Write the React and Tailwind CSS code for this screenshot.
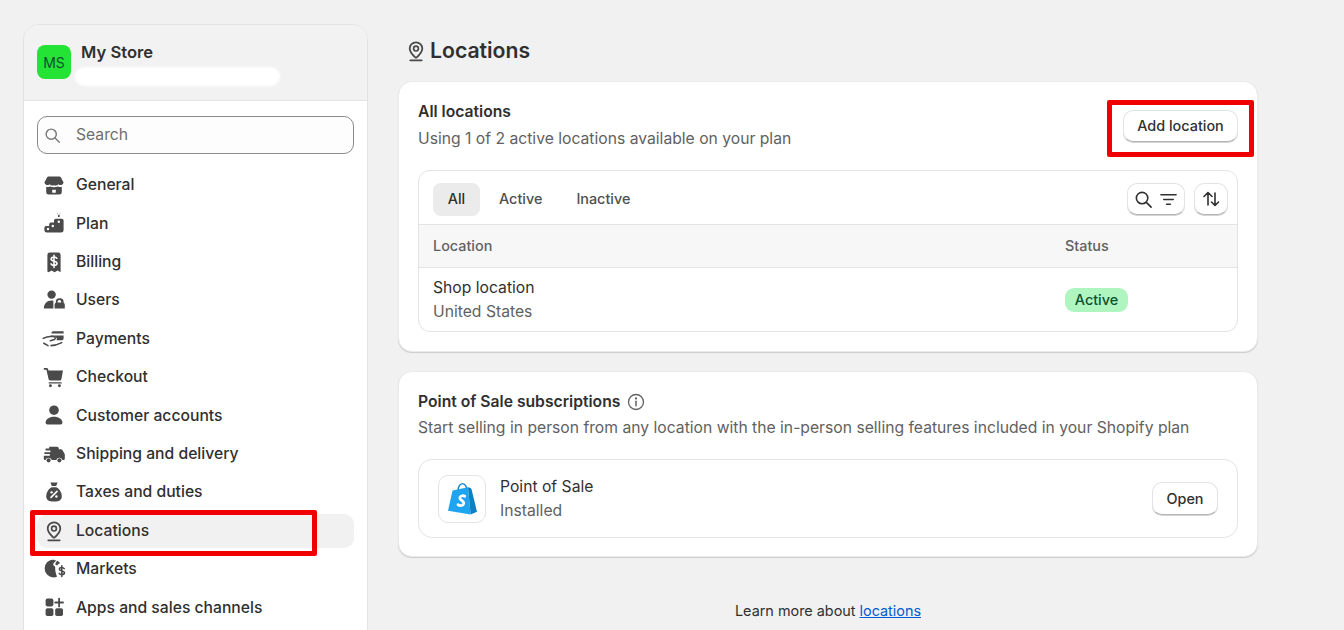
import React from 'react';

// Polaris-like icons, drawn on a 20x20 grid
const Glyph = ({ children, className = 'w-6 h-6' }) => (
  <svg viewBox="0 0 20 20" className={className} fill="#4a4a4a">{children}</svg>
);

const PinIcon = ({ className }) => (
  <Glyph className={className}>
    <path fillRule="evenodd" d="M10 2a6 6 0 0 0-6 6c0 2.7 2 5 3.9 6.9.6.6 1.4 1.2 2.1 1.6.7-.4 1.5-1 2.1-1.6C14 13 16 10.7 16 8a6 6 0 0 0-6-6Zm0 1.5A4.5 4.5 0 0 1 14.5 8c0 2-1.5 3.9-3.4 5.8-.4.4-.8.7-1.1.9-.3-.2-.7-.5-1.1-.9C7 11.9 5.500 10 5.500 8A4.500 4.500 0 0 1 10 3.500Z" />
    <path fillRule="evenodd" d="M10 5.300a2.700 2.700 0 1 0 0 5.400 2.700 2.700 0 0 0 0-5.400Zm0 1.400a1.300 1.300 0 1 1 0 2.600 1.300 1.300 0 0 1 0-2.600Z" />
    <rect x="4.500" y="17" width="11" height="1.500" rx=".75" />
  </Glyph>
);

const navIcons = {
  general: (
    <Glyph>
      <path d="M5.500 3h9a1.500 1.500 0 0 1 1.300.8L18 8a2.600 2.600 0 0 1-4.300 1.400 3.300 3.300 0 0 1-3.700.8 3.300 3.300 0 0 1-3.700-.8A2.600 2.600 0 0 1 2 8l2.200-4.200A1.500 1.500 0 0 1 5.500 3Z" />
      <path fillRule="evenodd" d="M3.500 11.500c1 .3 2.200.2 3.200-.3 2 .8 4.600.8 6.600 0 1 .5 2.200.6 3.200.3V16a2 2 0 0 1-2 2H5.500a2 2 0 0 1-2-2v-4.500Zm5 2.500v2.500h3V14h-3Z" />
    </Glyph>
  ),
  plan: (
    <Glyph>
      <path d="M2 14a1.500 1.500 0 0 1 1.500-1.500H6V11a1.500 1.500 0 0 1 1.500-1.500H10V8a1.500 1.500 0 0 1 1.500-1.500h5A1.500 1.500 0 0 1 18 8v8a2 2 0 0 1-2 2H4a2 2 0 0 1-2-2v-2Z" />
      <circle cx="14" cy="9" r="1" fill="#fff" />
      <circle cx="9" cy="12.500" r="1" fill="#fff" />
      <circle cx="5" cy="15" r="1" fill="#fff" />
      <path d="M13.300 2h1.400v3h-1.400zM12.500 2l1.500 1.500L15.500 2z" />
    </Glyph>
  ),
  billing: (
    <Glyph>
      <path d="M4.500 4a2 2 0 0 1 2-2h7a2 2 0 0 1 2 2v14.500l-2.500-1.500-2.500 1.500-2.500-1.500-2.500 1.500L4.500 18V4Z" />
      <path d="M12.400 6.900c-.4-.7-1.300-1.100-2.400-1.100-1.400 0-2.400.7-2.400 1.800 0 2.400 4.900 1.100 4.900 3.500 0 1.100-1.100 1.800-2.500 1.800-1.200 0-2.100-.5-2.500-1.300M10 4.500v10" fill="none" stroke="#fff" strokeWidth="1.300" strokeLinecap="round" />
    </Glyph>
  ),
  users: (
    <Glyph>
      <circle cx="8" cy="5.500" r="3.500" />
      <path d="M1.500 17c0-3.700 2.600-6.500 6.500-6.500.5 0 1 0 1.500.1V17H1.500Z" />
      <path fillRule="evenodd" d="M14.500 8.500A3 3 0 0 0 11.500 11.500v.7a1.700 1.700 0 0 0-1 1.500V17h8.500v-3.300a1.700 1.700 0 0 0-1-1.500v-.7a3 3 0 0 0-3-3Zm0 1.500A1.500 1.500 0 0 1 16 11.500V12h-3v-.5A1.500 1.500 0 0 1 14.500 10Z" />
    </Glyph>
  ),
  payments: (
    <Glyph>
      <path d="M8 4.500a1.500 1.500 0 0 1 1.500-1H18v2H7.700L8 4.500ZM7 7h11v2.500a1.500 1.500 0 0 1-1.500 1.500h-4.400c.5-.8.300-2-.6-2.600-.7-.400-1.500-.4-2.500-.4H7.500L7 7Z" />
      <path d="M1 9.500c2-1 4-1.600 6-1.600h2.500c1.500 0 2.200 1.800.8 2.500L7 11.500M7.500 15.500c3 0 6-1 9-2.500M1.500 13.500 5 15.500" fill="none" stroke="#4a4a4a" strokeWidth="1.300" strokeLinecap="round" />
    </Glyph>
  ),
  checkout: (
    <Glyph>
      <path d="M1.500 2.500h2.200a1.500 1.500 0 0 1 1.500 1.200l.2.800h12.100l-1.300 7.200a1.500 1.500 0 0 1-1.500 1.300H7a1.500 1.500 0 0 1-1.500-1.200L3.700 4H1.500V2.500Z" />
      <rect x="5.500" y="14.300" width="11" height="1.200" rx=".6" />
      <circle cx="7" cy="17.300" r="1.200" />
      <circle cx="14.500" cy="17.300" r="1.200" />
    </Glyph>
  ),
  customers: (
    <Glyph>
      <circle cx="10" cy="6" r="4" />
      <path d="M3 16.500c0-3 3-5 7-5s7 2 7 5a1.500 1.500 0 0 1-1.500 1.500h-11A1.500 1.500 0 0 1 3 16.500Z" />
    </Glyph>
  ),
  shipping: (
    <Glyph>
      <path d="M6 4h6.500A1.500 1.500 0 0 1 14 5.500V6h1.700a1.500 1.500 0 0 1 1.300.7l1.800 3a1.500 1.500 0 0 1 .2.800V14a1 1 0 0 1-1 1h-1a2.700 2.700 0 0 0-5.100 0H8.100a2.700 2.700 0 0 0-5.200 0H2.500a1 1 0 0 1-1-1v-2.500h5V10H2V8.500h5V7H3V5.500h3V4Z" />
      <circle cx="5.500" cy="15.300" r="1.700" />
      <circle cx="14.500" cy="15.300" r="1.700" />
    </Glyph>
  ),
  taxes: (
    <Glyph>
      <path d="M7 2h6l-1.200 3H8.200L7 2Z" />
      <path d="M8 6h4c2.500 1.300 4.500 4.500 4.500 7.500 0 3-2 4.500-6.500 4.500s-6.500-1.500-6.500-4.500C3.500 10.500 5.500 7.300 8 6Z" />
      <path d="m7.500 14.500 5-5" stroke="#fff" strokeWidth="1.300" strokeLinecap="round" />
      <circle cx="8" cy="10.300" r="1" fill="#fff" />
      <circle cx="12" cy="13.700" r="1" fill="#fff" />
    </Glyph>
  ),
  locations: <PinIcon className="w-6 h-6" />,
  markets: (
    <Glyph>
      <path d="M9.500 2.500a7.500 7.500 0 0 1 2.500.4L9.800 5c-.8.800-.5 2 .5 2.500.9.400.7 1.500.7 2.500 0 2 .7 4 1.500 6.500-.9.300-1.800.5-2.800.5a7.500 7.500 0 0 1 0-15Z" />
      <path d="M12.500 3.200c1.100.5 2 1.200 2.700 2.100-1.100.2-2 .8-2.500 1.700-.7-.3-1.500-.6-1.700-1.200l1.500-2.600Z" />
      <path d="M18.500 9.700c-.5-.7-1.200-1-2-1-1.200 0-2 .6-2 1.500 0 2 4.200.9 4.200 3 0 .9-.9 1.500-2.100 1.500-1 0-1.800-.4-2.200-1.100M16.500 7.300v9" fill="none" stroke="#4a4a4a" strokeWidth="1.300" strokeLinecap="round" />
    </Glyph>
  ),
  apps: (
    <Glyph>
      <rect x="3" y="3" width="6.500" height="6.500" rx="1.500" />
      <rect x="3" y="11" width="6.500" height="6.500" rx="1.500" />
      <rect x="11" y="11" width="6.500" height="6.500" rx="1.500" />
      <path d="M14.250 3v6.500M11 6.250h6.500" stroke="#4a4a4a" strokeWidth="1.500" strokeLinecap="round" />
    </Glyph>
  ),
};

const navItems = [
  ['general', 'General'],
  ['plan', 'Plan'],
  ['billing', 'Billing'],
  ['users', 'Users'],
  ['payments', 'Payments'],
  ['checkout', 'Checkout'],
  ['customers', 'Customer accounts'],
  ['shipping', 'Shipping and delivery'],
  ['taxes', 'Taxes and duties'],
  ['locations', 'Locations'],
  ['markets', 'Markets'],
  ['apps', 'Apps and sales channels'],
];

const Sidebar = () => (
  <aside className="w-[345px] shrink-0 h-[640px] bg-white rounded-t-[16px] border border-[#e3e3e3] overflow-hidden">
    <div className="h-[76px] bg-[#f2f2f2] border-b border-[#e3e3e3] flex items-start pl-[13px] pt-[20px] gap-[10px]">
      <div className="w-[34px] h-[34px] rounded-[8px] bg-[#25e334] flex items-center justify-center text-[14px] text-[#0c5132]">MS</div>
      <div className="-mt-[1px]">
        <div className="text-[16.6px] leading-[16px] font-semibold text-[#303030]">My Store</div>
        <div className="w-[205px] h-[19px] mt-[7px] -ml-[6px] rounded-full bg-white blur-[1px]" />
      </div>
    </div>
    <div className="px-[13px] pt-[15px]">
      <div className="h-[38px] rounded-[10px] border border-[#8a8a8a] bg-[#fdfdfd] flex items-center pl-[6px] gap-[15px] text-[#6f6f6f]">
        <svg viewBox="0 0 20 20" className="w-[17px] h-[17px]" fill="none" stroke="#7a7a7a" strokeWidth="1.700" strokeLinecap="round">
          <circle cx="8.500" cy="8.500" r="6" />
          <path d="m13 13 5 5" />
        </svg>
        <span className="text-[15.7px]">Search</span>
      </div>
      <nav className="mt-[14px] flex flex-col gap-[4.4px]">
        {navItems.map(([id, label]) => (
          <div
            key={id}
            className={`h-[34px] shrink-0 flex items-center pl-[5px] gap-[10px] rounded-[10px] text-[15.7px] font-[500] text-[#303030] ${id === 'locations' ? 'bg-[#f1f1f1]' : ''}`}
          >
            {navIcons[id]}
            <span>{label}</span>
          </div>
        ))}
      </nav>
    </div>
  </aside>
);

const SecondaryButton = ({ children, className = '' }) => (
  <button className={`bg-white rounded-[10px] border border-[#e3e3e3] border-b-[#b5b5b5] shadow-[0_1px_0_#d4d4d4] flex items-center justify-center text-[14.4px] font-[550] text-[#303030] ${className}`}>
    {children}
  </button>
);

const Card = ({ children, className = '' }) => (
  <section className={`bg-white rounded-[14px] border border-[#ebebeb] shadow-[0_1px_1px_rgba(0,0,0,0.15)] px-[19px] ${className}`}>
    {children}
  </section>
);

const LocationsCard = () => (
  <Card className="h-[271px] pt-[19px]">
    <div className="flex justify-between">
      <div>
        <h2 className="text-[15.7px] leading-[22px] font-semibold text-[#303030]">All locations</h2>
        <p className="mt-[5px] text-[15.7px] leading-[22px] text-[#616161]">Using 1 of 2 active locations available on your plan</p>
      </div>
      <SecondaryButton className="w-[115px] h-[32px] mt-[9px]">Add location</SecondaryButton>
    </div>
    <div className="mt-[20px] h-[162px] rounded-[12px] border border-[#e3e3e3] overflow-hidden">
      <div className="h-[53px] pt-[3px] flex items-center pl-[14px] pr-[9px] text-[14.4px] font-[550] text-[#4f4f4f]">
        <span className="w-[47px] h-[33px] rounded-[8px] bg-[#ebebeb] flex items-center justify-center text-[#303030]">All</span>
        <span className="ml-[19px]">Active</span>
        <span className="ml-[34px]">Inactive</span>
        <SecondaryButton className="ml-auto w-[58px] h-[32px] gap-[6px]">
          <svg viewBox="0 0 20 20" className="w-[19px] h-[19px]" fill="none" stroke="#303030" strokeWidth="1.700" strokeLinecap="round">
            <circle cx="8.500" cy="8.500" r="6" />
            <path d="m13 13 5 5" />
          </svg>
          <svg viewBox="0 0 20 20" className="w-[19px] h-[19px]" fill="none" stroke="#303030" strokeWidth="1.600" strokeLinecap="round">
            <path d="M2 5h16M5 10h10M8 15h4" />
          </svg>
        </SecondaryButton>
        <SecondaryButton className="ml-[9px] w-[34px] h-[32px]">
          <svg viewBox="0 0 20 20" className="w-[20px] h-[20px]" fill="none" stroke="#303030" strokeWidth="1.600" strokeLinecap="round" strokeLinejoin="round">
            <path d="M7 16V3.500M3 7.500l4-4 4 4M14 4v12.500M10.500 13l3.500 3.500 3.500-3.500" />
          </svg>
        </SecondaryButton>
      </div>
      <div className="h-[44px] bg-[#f7f7f7] border-y border-[#e3e3e3] flex items-center text-[14.4px] font-[550] text-[#616161]">
        <span className="w-[646px] pl-[14px]">Location</span>
        <span>Status</span>
      </div>
      <div className="h-[63px] flex items-center">
        <div className="w-[646px] pl-[14px] text-[15.7px] leading-[24px]">
          <div className="text-[#303030]">Shop location</div>
          <div className="text-[#616161]">United States</div>
        </div>
        <span className="w-[63px] h-[24px] rounded-[9px] bg-[#aff5c0] flex items-center justify-center text-[14.4px] font-[550] text-[#0c5132]">Active</span>
      </div>
    </div>
  </Card>
);

const PointOfSaleCard = () => (
  <Card className="h-[186px] mt-[19px] pt-[18px]">
    <div className="flex items-center gap-[6px] h-[24px]">
      <h2 className="text-[15.7px] font-semibold text-[#303030]">Point of Sale subscriptions</h2>
      <svg viewBox="0 0 20 20" className="w-[20px] h-[20px]" fill="none" stroke="#616161" strokeWidth="1.300" strokeLinecap="round">
        <circle cx="10" cy="10" r="7.500" />
        <path d="M10 9.300v4.500" strokeWidth="1.500" />
        <circle cx="10" cy="6.500" r=".5" fill="#616161" />
      </svg>
    </div>
    <p className="mt-[1px] text-[15.7px] leading-[26px] text-[#616161]">Start selling in person from any location with the in-person selling features included in your Shopify plan</p>
    <div className="mt-[18px] h-[79px] rounded-[14px] border border-[#e3e3e3] flex items-center pl-[19px] pr-[19px]">
      <div className="w-[48px] h-[48px] rounded-[10px] border border-[#e3e3e3] flex items-center justify-center">
        <svg viewBox="0 0 32 36" className="w-[29px] h-[34px]">
          <path d="M11 9c0-4 2-8 5-8s5 4 5 8" fill="none" stroke="#0f7fc4" strokeWidth="1.500" />
          <path d="M5 8.500 22 5l3 30L0 31z" fill="#1fa5ef" />
          <path d="m22 5 3 .8 1 1.700 6 24.500-7 3z" fill="#0f7fc4" />
          <path d="M18.500 15c-2-1.200-5.500-.5-5.500 2 0 2.500 5 2.900 4.300 6.200-.5 2.300-3.800 2.600-6.300 1.100" fill="none" stroke="#fff" strokeWidth="3" strokeLinecap="round" />
        </svg>
      </div>
      <div className="ml-[14px] text-[15.7px] leading-[24px]">
        <div className="text-[#303030]">Point of Sale</div>
        <div className="text-[#616161]">Installed</div>
      </div>
      <SecondaryButton className="ml-auto w-[66px] h-[33px]">Open</SecondaryButton>
    </div>
  </Card>
);

export default function App() {
  return (
    <div className="relative h-[630px] w-[1344px] overflow-hidden bg-[#f1f1f1] font-['Inter',sans-serif]">
      <div className="flex items-start pl-[23px] pt-[24px] gap-[30px]">
        <Sidebar />
        <main className="w-[860px] pt-[13px]">
          <div className="flex items-center gap-[2px] h-[28px] pl-[6px] text-[#303030]">
            <PinIcon className="w-[24px] h-[24px]" />
            <h1 className="text-[21.2px] font-semibold">Locations</h1>
          </div>
          <div className="mt-[16px]">
            <LocationsCard />
            <PointOfSaleCard />
          </div>
          <p className="mt-[43px] text-center text-[14.4px] leading-[22px] text-[#303030]">
            Learn more about <a className="text-[#005bd3] underline">locations</a>
          </p>
        </main>
      </div>
      {/* annotation boxes from the screenshot */}
      <div className="absolute left-[30px] top-[510px] w-[287px] h-[46px] border-[5px] border-[#f00000] rounded-[2px]" />
      <div className="absolute left-[1107px] top-[100px] w-[147px] h-[57px] border-[5px] border-[#f00000] rounded-[2px]" />
    </div>
  );
}
